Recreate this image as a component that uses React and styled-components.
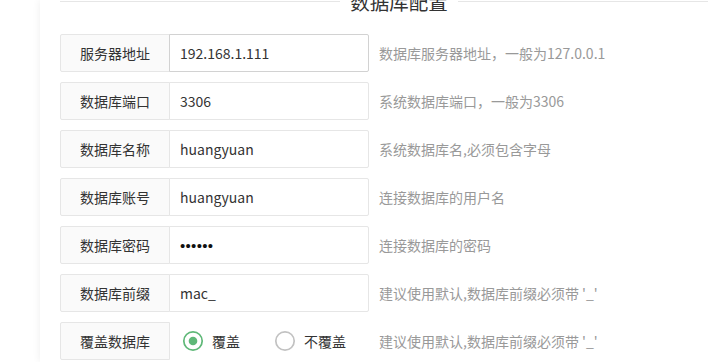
import React from "react";
import styled, { createGlobalStyle } from "styled-components";

const Global = createGlobalStyle`
  html, body { margin: 0; padding: 0; background: #fff; overflow: hidden; }
  body { font-family: "Noto Sans CJK SC", "Microsoft YaHei", sans-serif; font-size: 14px; color: #333; }
`;

const Page = styled.div`
  display: flex;
  height: 362px;
  padding-left: 40px;
  overflow: hidden;
`;

const Panel = styled.div`
  flex: 1;
  margin-right: -30px;
  background: #fff;
  box-shadow: 0 0 8px rgba(0, 0, 0, 0.07);
  padding: 0 0 0 20px;
  display: flex;
  flex-direction: column;
`;

const TitleRow = styled.div`
  display: flex;
  align-items: center;
  height: 22px;
  margin-top: -10px;
`;

const Line = styled.div`
  flex: 1;
  height: 1px;
  background: #e6e6e6;
`;

const Legend = styled.div`
  padding: 0 10px;
  font-size: 19.5px;
  line-height: 22px;
  color: #333;
  white-space: nowrap;
  position: relative;
  top: 1px;
`;

const Form = styled.div`
  display: flex;
  flex-direction: column;
  gap: 10px;
  margin-top: 22px;
`;

const Row = styled.div`
  display: flex;
  align-items: center;
  height: 38px;
`;

const Label = styled.div`
  box-sizing: border-box;
  width: 110px;
  height: 38px;
  border: 1px solid #e6e6e6;
  border-radius: 2px 0 0 2px;
  background: #fafafa;
  display: flex;
  align-items: center;
  justify-content: center;
  color: #333;
  font-size: 14px;
`;

const Input = styled.input`
  box-sizing: border-box;
  width: 200px;
  height: 38px;
  margin-left: -1px;
  border: 1px solid ${(p) => (p.$active ? "#d2d2d2" : "#e6e6e6")};
  border-radius: 0 2px 2px 0;
  padding: 0 10px;
  font-family: inherit;
  font-size: 14px;
  color: #333;
  background: #fff;
  outline: none;
`;

const SecretInput = styled(Input)`
  font-family: "Liberation Sans", Arial, sans-serif;
  font-size: 15px;
  color: #111;
  letter-spacing: 0.3px;
`;

const RadioGroup = styled.div`
  box-sizing: border-box;
  width: 200px;
  margin-left: -1px;
  padding-left: 13px;
  display: flex;
  align-items: center;
  height: 38px;
`;

const RadioItem = styled.div`
  display: flex;
  align-items: center;
  margin-right: ${(p) => p.$mr || 0}px;
  color: #333;
`;

const RadioIcon = styled.svg`
  width: 22px;
  height: 22px;
  margin-right: 8px;
  display: block;
`;

const Aux = styled.div`
  margin-left: 10px;
  color: #999;
  font-size: 14px;
  white-space: nowrap;
`;

const Radio = ({ checked, label, mr }) => (
  <RadioItem $mr={mr}>
    <RadioIcon viewBox="0 0 22 22">
      <circle
        cx="11"
        cy="11"
        r="9.2"
        fill="#fff"
        stroke={checked ? "#5FB878" : "#c2c2c2"}
        strokeWidth="1.7"
      />
      {checked && <circle cx="11" cy="11" r="4.3" fill="#5FB878" />}
    </RadioIcon>
    {label}
  </RadioItem>
);

const rows = [
  { label: "服务器地址", value: "192.168.1.111", aux: "数据库服务器地址，一般为127.0.0.1", active: true },
  { label: "数据库端口", value: "3306", aux: "系统数据库端口，一般为3306" },
  { label: "数据库名称", value: "huangyuan", aux: "系统数据库名,必须包含字母" },
  { label: "数据库账号", value: "huangyuan", aux: "连接数据库的用户名" },
  { label: "数据库密码", value: "••••••", aux: "连接数据库的密码", secret: true },
  { label: "数据库前缀", value: "mac_", aux: "建议使用默认,数据库前缀必须带 '_'" },
];

export default function App() {
  return (
    <>
      <Global />
      <Page>
        <Panel>
          <TitleRow>
            <Line />
            <Legend>数据库配置</Legend>
            <Line />
          </TitleRow>
          <Form>
            {rows.map((r) => (
              <Row key={r.label}>
                <Label>{r.label}</Label>
                {r.secret ? (
                  <SecretInput readOnly value={r.value} />
                ) : (
                  <Input readOnly value={r.value} $active={r.active} />
                )}
                <Aux>{r.aux}</Aux>
              </Row>
            ))}
            <Row>
              <Label>覆盖数据库</Label>
              <RadioGroup>
                <Radio checked label="覆盖" mr={34} />
                <Radio label="不覆盖" />
              </RadioGroup>
              <Aux>建议使用默认,数据库前缀必须带 '_'</Aux>
            </Row>
          </Form>
        </Panel>
      </Page>
    </>
  );
}
